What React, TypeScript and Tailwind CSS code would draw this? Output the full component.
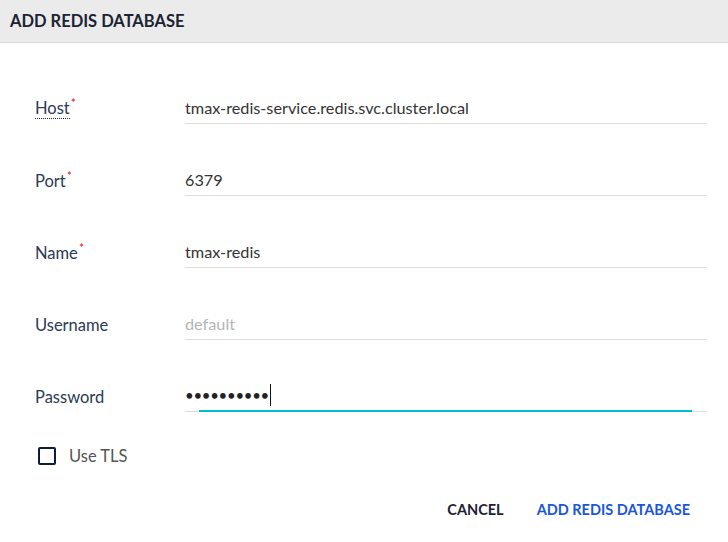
import React from 'react';

interface FieldProps {
  label: string;
  value: string;
  required?: boolean;
  hint?: boolean;
  placeholder?: boolean;
}

function Field({ label, value, required, hint, placeholder }: FieldProps) {
  return (
    <div className="flex h-[33px] items-stretch">
      <div className="flex w-[150px] shrink-0 items-center pt-[2px]">
        <span
          className={`relative text-[16.5px] leading-[20px] text-[#2b3a55] ${
            hint ? 'border-b border-dotted border-[#222]' : ''
          }`}
        >
          {label}
          {required && (
            <span className="absolute -right-[6px] -top-[1px] text-[11px] font-bold leading-none text-[#e53935]">
              *
            </span>
          )}
        </span>
      </div>
      <div className="flex flex-1 items-center border-b border-[#dcdcdc] pt-[2px]">
        <span
          className={`text-[16.25px] leading-[20px] ${
            placeholder ? 'text-[#b5b5b5]' : 'text-[#333]'
          }`}
        >
          {value}
        </span>
      </div>
    </div>
  );
}

function PasswordField() {
  return (
    <div className="flex h-[33px] items-stretch">
      <div className="flex w-[150px] shrink-0 items-center pt-[2px]">
        <span className="text-[16.5px] leading-[20px] text-[#2b3a55]">Password</span>
      </div>
      <div className="relative flex flex-1 items-center border-b border-[#dcdcdc]">
        <span className="text-[15px] tracking-[-0.3px] text-[#222]">
          ••••••••••
        </span>
        <span className="ml-[1px] h-[22px] w-[1px] bg-[#111]" />
        <div className="absolute -bottom-[1px] left-[14px] right-[15px] h-[2px] bg-[#00bcd4]" />
      </div>
    </div>
  );
}

export default function App() {
  return (
    <div
      className="h-[542px] w-[728px] bg-white"
      style={{ fontFamily: 'Lato, "Noto Sans", sans-serif' }}
    >
      <div className="flex h-[43px] items-center border-b border-[#d9d9d9] bg-[#ebebeb] px-[10px]">
        <h2 className="text-[16.5px] font-bold text-[#1c2333]">
          ADD REDIS DATABASE
        </h2>
      </div>

      <div className="flex flex-col gap-[39px] pl-[35px] pr-[21px] pt-[48px]">
        <Field
          label="Host"
          value="tmax-redis-service.redis.svc.cluster.local"
          required
          hint
        />
        <Field label="Port" value="6379" required />
        <Field label="Name" value="tmax-redis" required />
        <Field label="Username" value="default" placeholder />
        <PasswordField />
      </div>

      <label className="mt-[35px] flex h-[18px] items-center pl-[38px]">
        <span className="h-[18px] w-[18px] rounded-[2px] border-2 border-[#0d1b3d]" />
        <span className="ml-[13px] text-[16.5px] leading-[20px] text-[#555]">Use TLS</span>
      </label>

      <div className="mt-[36px] flex justify-end gap-[33px] pr-[38px]">
        <button className="text-[14.5px] font-bold leading-[18px] text-[#1c2333]">
          CANCEL
        </button>
        <button className="text-[14.5px] font-bold leading-[18px] text-[#1a56db]">
          ADD REDIS DATABASE
        </button>
      </div>
    </div>
  );
}
